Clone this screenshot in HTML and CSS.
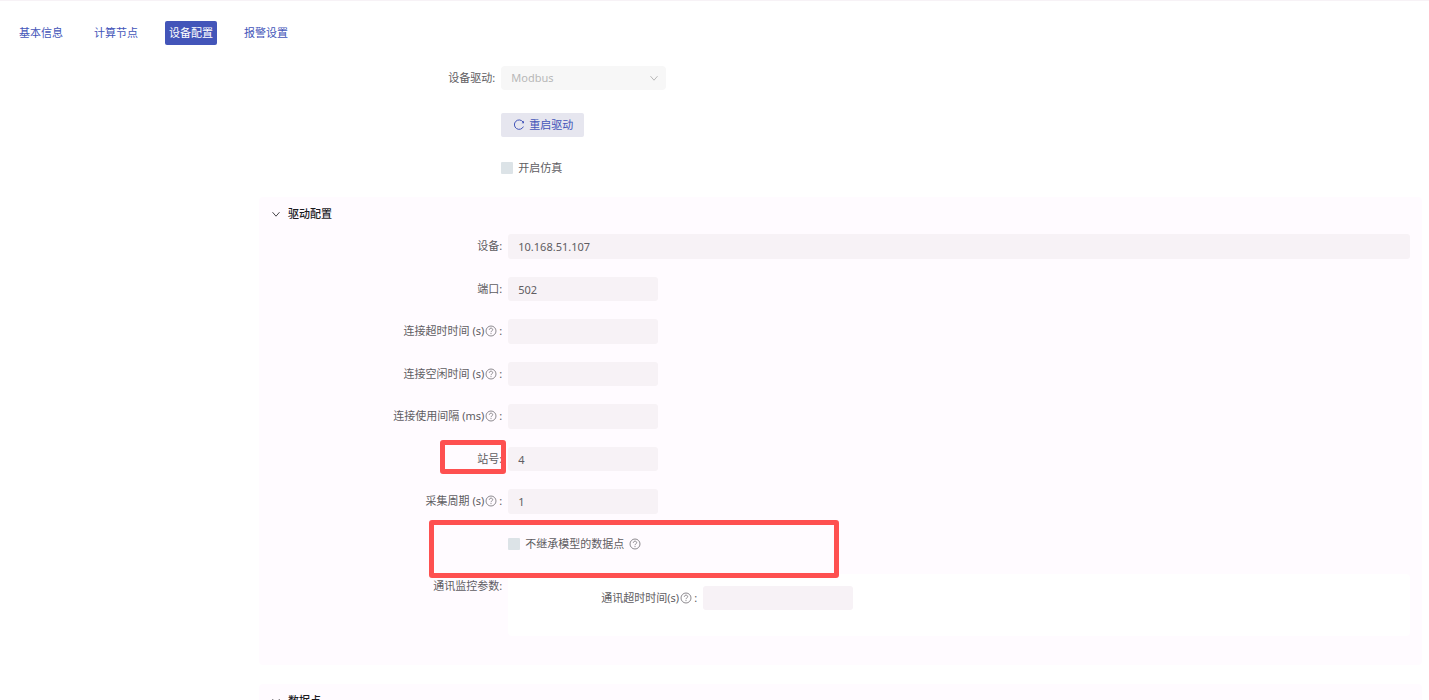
FILE: index.html
```html
<!DOCTYPE html>
<html lang="zh-CN">
<head>
<meta charset="utf-8">
<title>设备配置</title>
<link rel="stylesheet" href="styles.css">
</head>
<body>
<svg class="symbols" aria-hidden="true">
  <symbol id="chevron" viewBox="0 0 10 10"><path d="M1.5 3.2 5 7.2 8.5 3.2" fill="none" stroke="currentColor"/></symbol>
  <symbol id="question" viewBox="0 0 12 12"><circle cx="6" cy="6" r="5" fill="none" stroke="currentColor"/><path d="M4.3 4.8C4.3 2.6 7.7 2.6 7.7 4.7 7.7 5.9 6 5.8 6 7.2" fill="none" stroke="currentColor"/><circle cx="6" cy="8.6" r=".6" fill="currentColor"/></symbol>
  <symbol id="reload" viewBox="0 0 12 12"><path d="M10 3A4.7 4.7 0 1 0 10.4 7.6" fill="none" stroke="currentColor"/><path d="M11 1.8V4.2H8.6Z" fill="currentColor"/></symbol>
</svg>
<div class="page">
  <nav class="tabs">
    <button class="tab" type="button">基本信息</button>
    <button class="tab" type="button">计算节点</button>
    <button class="tab tab-active" type="button">设备配置</button>
    <button class="tab" type="button">报警设置</button>
  </nav>
  <main class="content">
    <form class="driver-form">
      <div class="row">
        <label class="label" for="driver">设备驱动:</label>
        <div class="control">
          <div class="select-wrap">
            <select class="select" id="driver" disabled><option>Modbus</option></select>
            <svg class="select-arrow"><use href="#chevron"/></svg>
          </div>
        </div>
      </div>
      <div class="row">
        <div class="control control-only"><button class="restart" type="button"><svg class="icon-reload"><use href="#reload"/></svg>重启驱动</button></div>
      </div>
      <div class="row">
        <div class="control control-only"><label class="check"><input type="checkbox" class="checkbox">开启仿真</label></div>
      </div>
    </form>

    <section class="panel">
      <h2 class="panel-head"><svg class="icon-chevron"><use href="#chevron"/></svg>驱动配置</h2>
      <form class="config-form">
        <div class="row">
          <label class="label" for="device">设备:</label>
          <div class="control"><input class="input input-wide" id="device" value="10.168.51.107"></div>
        </div>
        <div class="row">
          <label class="label" for="port">端口:</label>
          <div class="control"><input class="input" id="port" value="502"></div>
        </div>
        <div class="row">
          <label class="label" for="timeout">连接超时时间 (s)<svg class="icon-help"><use href="#question"/></svg>:</label>
          <div class="control"><input class="input" id="timeout"></div>
        </div>
        <div class="row">
          <label class="label" for="idle">连接空闲时间 (s)<svg class="icon-help"><use href="#question"/></svg>:</label>
          <div class="control"><input class="input" id="idle"></div>
        </div>
        <div class="row">
          <label class="label" for="interval">连接使用间隔 (ms)<svg class="icon-help"><use href="#question"/></svg>:</label>
          <div class="control"><input class="input" id="interval"></div>
        </div>
        <div class="row">
          <label class="label" for="station">站号:<span class="mark mark-station"></span></label>
          <div class="control"><input class="input" id="station" value="4"></div>
        </div>
        <div class="row">
          <label class="label" for="period">采集周期 (s)<svg class="icon-help"><use href="#question"/></svg>:</label>
          <div class="control"><input class="input" id="period" value="1"></div>
        </div>
        <div class="row">
          <div class="control control-only">
            <label class="check"><input type="checkbox" class="checkbox">不继承模型的数据点<svg class="icon-help icon-help-spaced"><use href="#question"/></svg></label>
            <span class="mark mark-inherit"></span>
          </div>
        </div>
        <div class="row row-group">
          <div class="label">通讯监控参数:</div>
          <div class="group">
            <div class="row">
              <label class="label" for="comm">通讯超时时间(s)<svg class="icon-help"><use href="#question"/></svg>:</label>
              <div class="control"><input class="input" id="comm"></div>
            </div>
          </div>
        </div>
      </form>
    </section>

    <section class="panel">
      <h2 class="panel-head"><svg class="icon-chevron"><use href="#chevron"/></svg>数据点</h2>
    </section>
  </main>
</div>
</body>
</html>
```
FILE: styles.css
```css
* {
  box-sizing: border-box;
}

body {
  margin: 0;
  background: #fff;
  color: #605d62;
  font: 11px/16px "Noto Sans", "Noto Sans CJK SC", sans-serif;
}

button,
input,
select {
  font: inherit;
  color: inherit;
  border: 0;
  margin: 0;
}

.symbols {
  display: none;
}

.page {
  height: 100vh;
  overflow-y: auto;
  scrollbar-width: none;
  border-top: 1px solid #f7f2f6;
}

.tabs {
  display: flex;
  gap: 23px;
  padding: 20px 15px 21px;
}

.tab {
  height: 24px;
  padding: 0 4px;
  border-radius: 2px;
  background: none;
  color: #4355b9;
  white-space: nowrap;
}

.tab-active {
  background: #4355b9;
  color: #fff;
}

.content {
  padding: 0 7px 0 259px;
}

.driver-form {
  display: flex;
  flex-direction: column;
  gap: 23px;
  padding-bottom: 25px;
}

.row {
  display: grid;
  grid-template-columns: 5fr 19fr;
  height: 24px;
}

.driver-form .row:last-child {
  height: 12px;
}

.label {
  position: relative;
  display: flex;
  align-items: center;
  justify-content: flex-end;
  height: 24px;
  padding-right: 6px;
  white-space: pre;
}

.control {
  position: relative;
  display: flex;
  align-items: center;
  min-width: 0;
}

.control-only {
  grid-column: 2;
}

.select-wrap {
  position: relative;
  width: 165px;
}

.select {
  appearance: none;
  display: block;
  width: 100%;
  height: 24px;
  padding: 0 10px;
  border-radius: 4px;
  background: #f7f7f7;
  color: #b8b8b8;
  opacity: 1;
}

.select-arrow {
  position: absolute;
  top: 7px;
  right: 7px;
  width: 10px;
  height: 10px;
  color: #b8b8b8;
}

.restart {
  display: flex;
  align-items: center;
  gap: 4px;
  height: 24px;
  padding: 0 11px 0 12px;
  border-radius: 2px;
  background: #e6e6ef;
  color: #4355b9;
}

.icon-reload {
  width: 12px;
  height: 12px;
}

.check {
  display: flex;
  align-items: center;
  gap: 5px;
}

.checkbox {
  appearance: none;
  width: 12px;
  height: 12px;
  border-radius: 1px;
  background: #dce3e7;
}

.panel {
  margin-bottom: 19px;
  padding: 0 12px 29px;
  border-radius: 4px;
  background: #fffbff;
}

.panel-head {
  display: flex;
  align-items: center;
  gap: 7px;
  height: 37px;
  margin: 0;
  padding-bottom: 3px;
  color: #1c1b1f;
  font-size: 11px;
  font-weight: 500;
}

.icon-chevron {
  width: 10px;
  height: 10px;
  color: #48464a;
}

.config-form {
  display: flex;
  flex-direction: column;
  gap: 18px;
}

.config-form > .row:nth-child(odd) {
  height: 25px;
}

.config-form > .row-group:last-child {
  height: auto;
}

.input {
  width: 150px;
  height: 100%;
  padding: 0 10px;
  border-radius: 3px;
  background: #f7f2f6;
}

.input-wide {
  width: 100%;
}

.icon-help {
  width: 12px;
  height: 12px;
  margin: 0 2px 0 1px;
  color: #8d8a8f;
}

.icon-help-spaced {
  margin: 0;
}

.group {
  padding: 12px 12px 26px;
  border-radius: 4px;
  background: #fff;
}

.mark {
  position: absolute;
  z-index: 1;
  border: 5px solid #fe5050;
  border-radius: 3px;
  pointer-events: none;
}

.mark-station {
  top: -7px;
  right: 2px;
  width: 66px;
  height: 34px;
}

.mark-inherit {
  top: -12px;
  left: -79px;
  width: 410px;
  height: 58px;
}
```
